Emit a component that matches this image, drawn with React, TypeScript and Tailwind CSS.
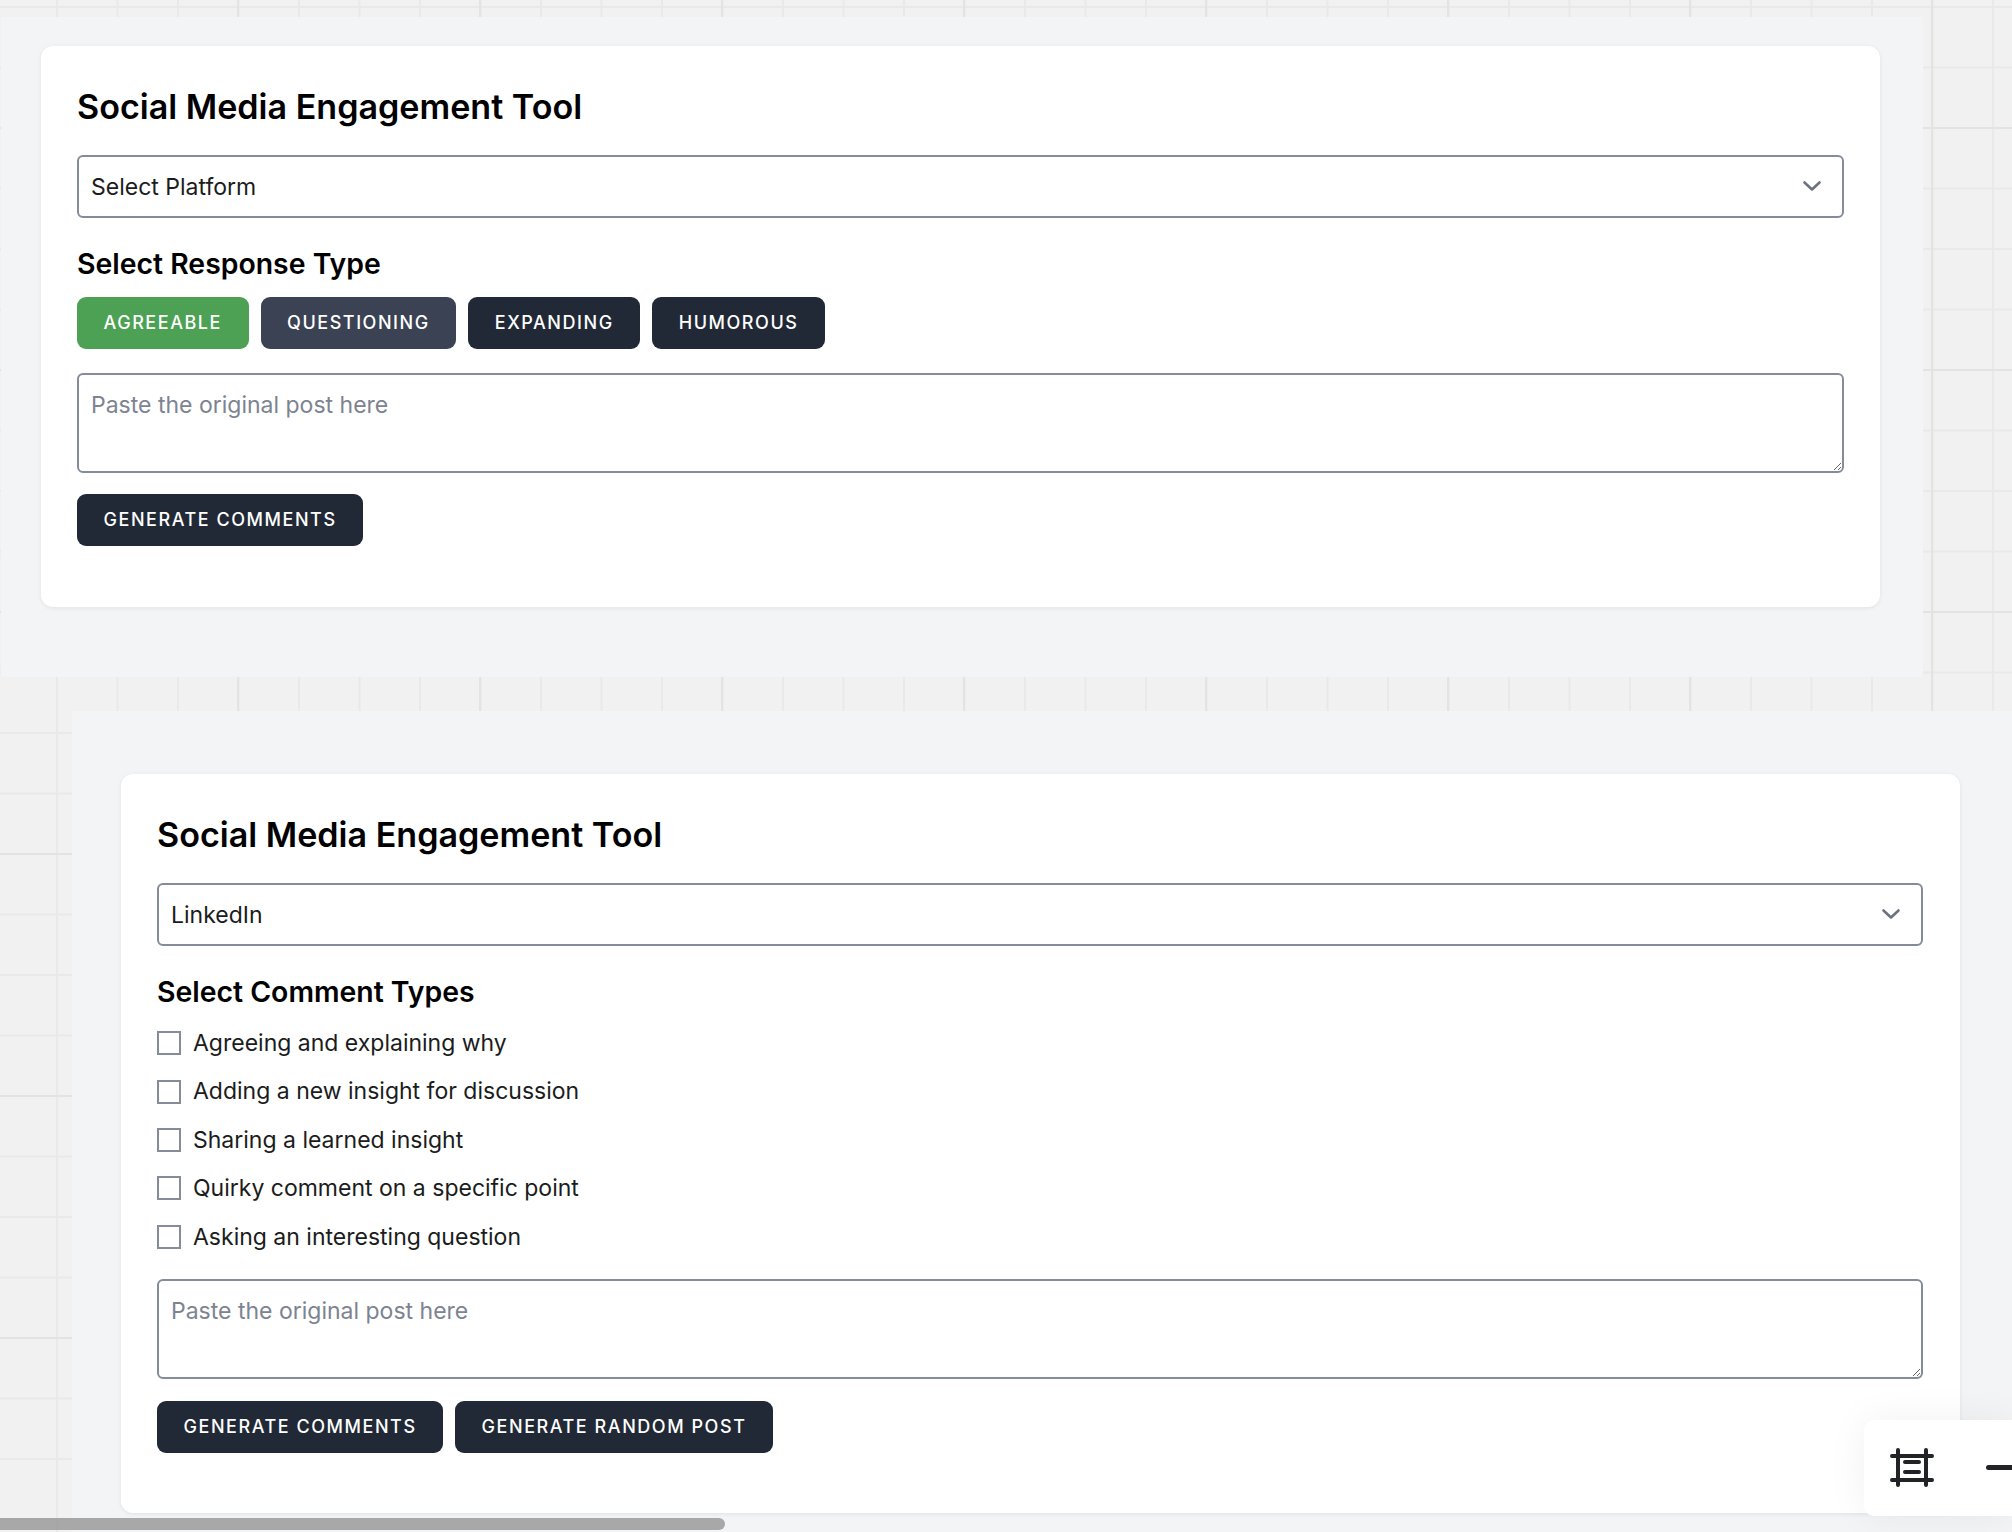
import React from 'react';

const FONT = "font-['Inter',sans-serif]";

const PlatformSelect: React.FC<{ value: string }> = ({ value }) => (
  <div className="relative">
    <select
      defaultValue={value}
      className="block w-full h-[63px] appearance-none bg-white border-2 border-[#858b99] rounded-[6px] pl-[12px] pt-[2px] text-[23px] text-[#1a1c20] outline-none"
    >
      <option>{value}</option>
    </select>
    <svg className="absolute right-[22px] top-[21px] w-[20px] h-[20px] text-[#6b7280]" viewBox="0 0 20 20" fill="none" stroke="currentColor" strokeWidth="2.6" strokeLinecap="round" strokeLinejoin="round">
      <path d="M2.5 6.5 10 13.5 17.5 6.5" />
    </svg>
  </div>
);

const PostInput: React.FC = () => (
  <textarea
    placeholder="Paste the original post here"
    className="block w-full h-[100px] bg-white border-2 border-[#858b99] rounded-[6px] px-[12px] py-[14px] text-[23px] leading-[33px] text-[#1a1c20] placeholder:text-[#7d8391] outline-none"
  />
);

const ActionButton: React.FC<{ label: string; className?: string }> = ({ label, className = 'bg-[#222936]' }) => (
  <button className={`h-[52px] px-[26.5px] pb-[1px] rounded-[9px] text-white text-[18px] font-medium tracking-[1.55px] uppercase ${className}`}>
    {label}
  </button>
);

const Title: React.FC = () => (
  <h2 className="text-[34.1px] leading-[44px] font-semibold text-black mb-[26px]">Social Media Engagement Tool</h2>
);

const Subtitle: React.FC<{ children: React.ReactNode }> = ({ children }) => (
  <h3 className="mt-[28px] text-[28.4px] leading-[36px] font-semibold text-black">{children}</h3>
);

const COMMENT_TYPES = [
  'Agreeing and explaining why',
  'Adding a new insight for discussion',
  'Sharing a learned insight',
  'Quirky comment on a specific point',
  'Asking an interesting question',
];

export default function App() {
  return (
    <div className={`relative h-screen overflow-hidden pt-[17px] bg-[#f1f1f1] ${FONT} [background-image:linear-gradient(to_right,#e3e3e3_2px,transparent_2px),linear-gradient(to_bottom,#e3e3e3_2px,transparent_2px),linear-gradient(to_right,#e9e9e9_2px,transparent_2px),linear-gradient(to_bottom,#e9e9e9_2px,transparent_2px)] [background-size:242px_242px,242px_242px,60.5px_60.5px,60.5px_60.5px] [background-position:237px_127px,237px_127px,56px_6px,56px_6px]`}>
      {/* first capture */}
      <section className="ml-[1px] w-[1922px] h-[660px] pl-[40px] pt-[29px] bg-[#f3f4f6]">
        <div className="w-[1839px] h-[561px] bg-white rounded-[12px] shadow-[0_1px_4px_rgba(0,0,0,0.08)] pl-[36px] pr-[36px] pt-[39px]">
          <Title />
          <PlatformSelect value="Select Platform" />
          <Subtitle>Select Response Type</Subtitle>
          <div className="flex gap-[12px] mt-[15px]">
            <ActionButton label="Agreeable" className="bg-[#4ca154]" />
            <ActionButton label="Questioning" className="bg-[#3b4253]" />
            <ActionButton label="Expanding" />
            <ActionButton label="Humorous" />
          </div>
          <div className="mt-[24px]">
            <PostInput />
          </div>
          <div className="mt-[21px]">
            <ActionButton label="Generate Comments" />
          </div>
        </div>
      </section>

      {/* second capture */}
      <section className="mt-[34px] ml-[72px] w-[2000px] h-[900px] pl-[49px] pt-[63px] bg-[#f3f4f6]">
        <div className="w-[1839px] h-[739px] bg-white rounded-[12px] shadow-[0_1px_4px_rgba(0,0,0,0.08)] pl-[36px] pr-[37px] pt-[39px]">
          <Title />
          <PlatformSelect value="LinkedIn" />
          <Subtitle>Select Comment Types</Subtitle>
          <div className="mt-[9px]">
            {COMMENT_TYPES.map((label) => (
              <label key={label} className="flex items-center h-[48.4px] gap-[12px] text-[23px] text-[#1a1c20]">
                <input type="checkbox" className="appearance-none w-[24px] h-[24px] bg-white border-2 border-[#858b99]" />
                {label}
              </label>
            ))}
          </div>
          <div className="mt-[18px]">
            <PostInput />
          </div>
          <div className="flex gap-[12px] mt-[22px]">
            <ActionButton label="Generate Comments" />
            <ActionButton label="Generate Random Post" />
          </div>
        </div>
      </section>

      {/* fake horizontal scrollbar */}
      <div className="absolute left-0 bottom-[2px] w-[725px] h-[12px] rounded-r-full bg-[#8f8f8f]/75" />

      {/* canvas toolbar */}
      <div className="absolute right-0 top-[1420px] w-[148px] h-[96px] bg-white rounded-l-[10px] shadow-[0_0_40px_rgba(0,0,0,0.06)] pl-[26px] pt-[28px]">
        <div className="flex items-start gap-[52px]">
          <svg className="w-[44px] h-[39px] shrink-0 text-[#222327]" viewBox="0 0 44 39" fill="none" stroke="currentColor" strokeWidth="4" strokeLinecap="round">
            <path d="M2 8H42M2 32H42M8 2V37M36 2V37M15 14H29M15 24H29" />
          </svg>
          <div className="w-[40px] h-[5px] mt-[17px] bg-[#222327] rounded-full shrink-0" />
        </div>
      </div>
    </div>
  );
}
